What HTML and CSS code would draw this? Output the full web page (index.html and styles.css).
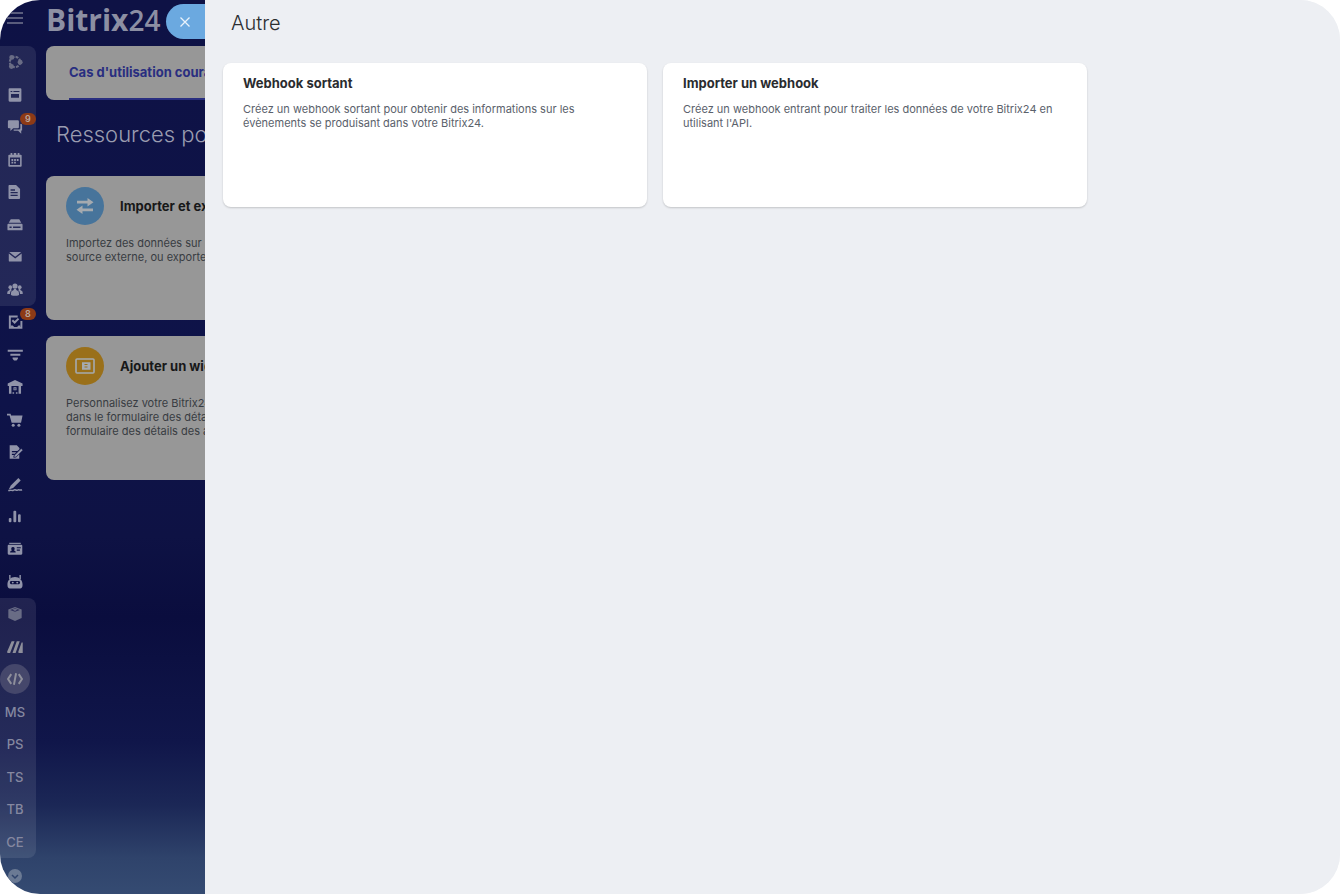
FILE: index.html
```
<!DOCTYPE html>
<html lang="fr">
<head>
<meta charset="utf-8">
<title>Bitrix24 - Autre</title>
<link rel="stylesheet" href="styles.css">
</head>
<body>
<div class="app">
  <aside class="sidebar">
    <button class="burger" aria-label="Menu">
      <svg width="16" height="14" viewBox="0 0 16 14"><path d="M0 2h16M0 7h16M0 12h16" stroke="currentColor" stroke-width="1.5"/></svg>
    </button>
    <nav class="menu" aria-label="Outils">
      <div class="group shaded g-top">
        <a class="item dim" href="#" aria-label="Collaboration"><svg viewBox="0 0 18 18"><circle cx="9" cy="9" r="5.800" fill="none" stroke="currentColor" stroke-width="2.400" stroke-dasharray="3.200 1.355"/><circle cx="5.400" cy="3.800" r="2.800"/><circle cx="14.800" cy="9.400" r="2.800"/><circle cx="5" cy="14" r="2.800"/></svg></a>
        <a class="item" href="#" aria-label="Actualités"><svg viewBox="0 0 18 18"><path fill-rule="evenodd" d="M3 1.500h12A1.200 1.200 0 0 1 16.200 2.700v12.600a1.200 1.200 0 0 1-1.200 1.200H3a1.200 1.200 0 0 1-1.200-1.200V2.700A1.200 1.200 0 0 1 3 1.500zM4 4.500v1.200h2V4.500zm3.200 0v1.200h6.800V4.500zM4.500 8v4h9V8z"/></svg></a>
        <a class="item" href="#" aria-label="Messagerie"><svg viewBox="0 0 18 18"><path d="M2.200 1.500h10A1.200 1.200 0 0 1 13.400 2.700v6.500a1.200 1.200 0 0 1-1.200 1.200H7L3.800 13.600v-3.200H2.200A1.200 1.200 0 0 1 1 9.200V2.700A1.200 1.200 0 0 1 2.200 1.500zM15 5.500h1a1 1 0 0 1 1 1V13h-1v3.500L12.500 13.300H7.500v-1.500h6a1.500 1.500 0 0 0 1.500-1.500z"/></svg><span class="badge">9</span></a>
        <a class="item" href="#" aria-label="Calendrier"><svg viewBox="0 0 18 18"><path fill-rule="evenodd" d="M4 1h2v2h1.600V1h2.800v2H12V1h2v2h1.500a1 1 0 0 1 1 1v11.500a1 1 0 0 1-1 1h-13a1 1 0 0 1-1-1V4a1 1 0 0 1 1-1H4zM3.300 6.200v8.500h11.400V6.200z"/><path d="M5 7.800h2v2.200H5zM8 7.800h2v2.200H8zM11 7.800h2v2.200h-2zM5 11h2v2H5zM8 11h2v2H8z"/></svg></a>
        <a class="item" href="#" aria-label="Documents"><svg viewBox="0 0 18 18"><path fill-rule="evenodd" d="M2.700 1h7.500l4.500 4.500v10.300a1 1 0 0 1-1 1h-11a1 1 0 0 1-1-1V2a1 1 0 0 1 1-1zM4 6v1.500h5V6zm0 3v1.500h8V9zm0 3v1.500h8V12z"/></svg></a>
        <a class="item" href="#" aria-label="Drive"><svg viewBox="0 0 18 18"><path d="M4.200 2.500h9.600l2.200 4H2z"/><path fill-rule="evenodd" d="M1.500 7.600h15a1 1 0 0 1 1 1v5.400a1 1 0 0 1-1 1h-15a1 1 0 0 1-1-1V8.600a1 1 0 0 1 1-1zm1.300 3.200v1.600h2.400v-1.600zm4 0v1.600h8.400v-1.600z"/></svg></a>
        <a class="item" href="#" aria-label="Webmail"><svg viewBox="0 0 18 18"><path d="M2.500 3.500h13.500L9.200 8.800zM2 5 9.200 10.800 16.500 5v8.200a1 1 0 0 1-1 1H3a1 1 0 0 1-1-1z"/></svg></a>
        <a class="item" href="#" aria-label="Groupes de travail"><svg viewBox="0 0 18 18"><circle cx="9" cy="4.500" r="2.900"/><circle cx="3.700" cy="5.800" r="2.100"/><circle cx="14.300" cy="5.800" r="2.100"/><path d="M7.800 7.500h2.400l.3 1.500 2 1c1 .6.900 2 1.100 4.500-3 1.300-6.200 1.300-9.200 0 .2-2.500.1-3.900 1.100-4.500l2-1zM.3 13.500c0-2.500.1-3.100 1.300-3.700l1.300-.7.200-2h1.600l.2 1.700.5.400C3.500 10 3.700 11.500 3.400 13.500zM17.700 13.500c0-2.500-.1-3.100-1.300-3.700l-1.300-.7-.2-2h-1.600l-.2 1.700-.5.400c1.900.8 1.700 2.300 2 4.300z"/></svg></a>
      </div>
      <div class="group g-mid">
        <a class="item" href="#" aria-label="Tâches"><svg viewBox="0 0 18 18"><path d="M12 2.800H3.200v12.800h13V8" fill="none" stroke="currentColor" stroke-width="2.200"/><path d="M4 13h2.500l1.500 1.500h3.400l1.500-1.500H15v2H4z"/><path d="m6 7 2.600 2.600L13 5.200" fill="none" stroke="currentColor" stroke-width="2.200"/></svg><span class="badge">8</span></a>
        <a class="item" href="#" aria-label="CRM"><svg viewBox="0 0 18 18"><path d="M.8 3h17v2.300h-17zM3.800 7.600h11.200v2.200H3.800zM6.300 11.800h6v1.400l-1.600 2H7.900l-1.600-2z"/></svg></a>
        <a class="item" href="#" aria-label="Inventaire"><svg viewBox="0 0 18 18"><path fill-rule="evenodd" d="M9 1 17.500 5v3h-1.700v8.500H2.200V8H.8V5zM5 8v8.500h1.200v-1.700H8v1.700h2v-1.700h1.800v1.700H13V8zM7.300 9.300h3.400v3.400H7.300zM8.400 10.300v1.400h1.200v-1.400z"/></svg></a>
        <a class="item" href="#" aria-label="Boutique en ligne"><svg viewBox="0 0 18 18"><path d="M0 2h4l.6 2H17.500L15.800 12H5.200L2.900 3.800H0z"/><circle cx="7" cy="14.800" r="1.700"/><circle cx="13.400" cy="14.800" r="1.700"/></svg></a>
        <a class="item" href="#" aria-label="Contrats"><svg viewBox="0 0 18 18"><path d="M3 1.500h8l3 3v1.400L11.800 8H5.500v1.400h4.900L8.800 11H5.500v1.400h2.300L7.300 15h3l3.500-3.500v5H3z"/><path d="m16 5 1.900 1.900-7.600 7.600-2.600.7.700-2.600z" stroke="#10154d" stroke-width=".6"/></svg></a>
        <a class="item" href="#" aria-label="Signature"><svg viewBox="0 0 18 18"><path d="m12.800 1.200 2.600 2.600-8.500 8.500-5 1.700 2.400-4.300z"/><path d="M1.500 15.500c3-1.500 4 .5 6-.8s2.800.8 4.300 0 2.500.3 5.200-.2" fill="none" stroke="currentColor" stroke-width="1.700"/></svg></a>
        <a class="item" href="#" aria-label="Analyses"><svg viewBox="0 0 18 18"><rect x="2" y="10" width="3" height="5" rx="1.200"/><rect x="7.200" y="2" width="3.200" height="13" rx="1.200"/><rect x="12.400" y="6" width="3" height="9" rx="1.200"/></svg></a>
        <a class="item" href="#" aria-label="Employés"><svg viewBox="0 0 18 18"><path d="M2.500 2h13v1.300h-13z"/><path fill-rule="evenodd" d="M2 4.200h14a1.200 1.200 0 0 1 1.200 1.200v8.800a1.200 1.200 0 0 1-1.200 1.200H2a1.200 1.200 0 0 1-1.200-1.200V5.400A1.200 1.200 0 0 1 2 4.200zM3.500 12.900h6.300c0-1.500-.4-1.700-2-2.200 1.400-1.500 1.100-4-1.100-4s-2.500 2.500-1.100 4c-1.700.5-2.100.7-2.100 2.200zM11 7v1.200h4.500V7zm0 2.700v1.200h3.500V9.700z"/></svg></a>
        <a class="item" href="#" aria-label="Robots"><svg viewBox="0 0 18 18"><path d="M3.200 1v4.500M14.800 1v4.500" stroke="currentColor" stroke-width="1.600"/><path fill-rule="evenodd" d="M9 3.500c5 0 8.500 3.500 8.500 8.700 0 3-1 4.100-2.700 4.100H3.200c-1.700 0-2.700-1.100-2.700-4.100C.5 7 4 3.500 9 3.500zM4.500 8C3 8 2.800 11.400 4.600 11.400h8.800c1.800 0 1.600-3.400.1-3.400z"/><circle cx="6.500" cy="9.700" r="1.100"/><circle cx="11.500" cy="9.700" r="1.100"/></svg></a>
      </div>
      <div class="group shaded g-bottom">
        <a class="item dim" href="#" aria-label="Marché"><svg viewBox="0 0 18 18"><path d="M9 1.200 16.500 4v9.500L9 17l-7.500-3.500V4z"/><path d="M3.500 4.400 9 6.600l5.500-2.200L9 2.500z" fill="#2b2c5a"/><path d="M6 4 9 3l3 1-3 1.500z"/></svg></a>
        <a class="item soft" href="#" aria-label="Mon espace"><svg viewBox="0 0 18 18"><path d="M5.200 2.500h3.300L3.500 15.800H.7c-1-.8-.4-2 0-3zM11 2.500h3.300L9.700 15.800H6.200zM16.400 4h1.300v11.800h-4.500c-.8-.8-.5-2 0-3z"/></svg></a>
        <a class="item soft" href="#" aria-label="Développeurs" aria-current="page"><span class="current"><svg viewBox="0 0 18 18"><path d="M4.800 3.500 1.200 9l3.600 5.500M13.200 3.500 16.800 9l-3.600 5.500M10.200 2.500 7.800 15.500" fill="none" stroke="currentColor" stroke-width="2.200"/></svg></span></a>
        <a class="item text" href="#">MS</a>
        <a class="item text" href="#">PS</a>
        <a class="item text" href="#">TS</a>
        <a class="item text" href="#">TB</a>
        <a class="item text" href="#">CE</a>
      </div>
      <button class="more" aria-label="Plus"><svg width="14" height="14" viewBox="0 0 14 14"><circle cx="7" cy="7" r="7" fill="#6b7a94"/><path d="m4 6 3 3 3-3" fill="none" stroke="#30446c" stroke-width="1.500"/></svg></button>
    </nav>
  </aside>

  <main class="page">
    <header class="brand"><span class="brand-name">Bitrix</span><span class="brand-num">24</span></header>
    <div class="tabs"><a class="tab" href="#">Cas d'utilisation courants</a></div>
    <h1 class="page-title">Ressources pour développeurs</h1>
    <div class="tiles">
      <section class="tile">
        <div class="tile-head">
          <span class="disc blue"><svg width="18" height="18" viewBox="0 0 18 18"><path d="M1 3.800h10.500V.9L17.500 5.200l-6 4.300V6.600H1zM17 11.400H6.500V8.500L.5 12.800l6 4.300v-2.900H17z"/></svg></span>
          <h2>Importer et exporter</h2>
        </div>
        <p>Importez des données sur Bitrix24 d'une<br>source externe, ou exportez des données</p>
      </section>
      <section class="tile">
        <div class="tile-head">
          <span class="disc gold"><svg width="22" height="18" viewBox="0 0 22 18"><rect x="2" y="2" width="18" height="14" rx="1" fill="none" stroke="currentColor" stroke-width="1.600"/><path fill-rule="evenodd" d="M8 5.200h8.500v7.500H8zM10.500 7v1h3V7zm0 2.500v1h3v-1z"/></svg></span>
          <h2>Ajouter un widget</h2>
        </div>
        <p>Personnalisez votre Bitrix24 : ajoutez<br>dans le formulaire des détails du CRM, le<br>formulaire des détails des appels</p>
      </section>
    </div>
  </main>

  <section class="slider" aria-labelledby="slider-title">
    <button class="close" aria-label="Fermer"><svg width="12" height="12" viewBox="0 0 12 12"><path d="m1.500 1.500 9 9M10.500 1.500l-9 9" stroke="currentColor" stroke-width="1.300"/></svg></button>
    <h1 id="slider-title" class="slider-title">Autre</h1>
    <div class="cards">
      <a class="card" href="#">
        <h2>Webhook sortant</h2>
        <p>Créez un webhook sortant pour obtenir des informations sur les évènements se produisant dans votre Bitrix24.</p>
      </a>
      <a class="card" href="#">
        <h2>Importer un webhook</h2>
        <p>Créez un webhook entrant pour traiter les données de votre Bitrix24 en utilisant l'API.</p>
      </a>
    </div>
  </section>
</div>
</body>
</html>
```
FILE: styles.css
```
* { box-sizing: border-box; }
body { margin: 0; background: #fff; font-family: Inter, "Liberation Sans", sans-serif; }
h1, h2, p { margin: 0; }
a { color: inherit; text-decoration: none; }
button { border: 0; padding: 0; background: none; color: inherit; cursor: pointer; }
svg { display: block; fill: currentColor; flex: none; }

.app {
  position: relative;
  display: flex;
  min-height: 100vh;
  overflow: hidden;
  border-radius: 40px;
  background: #edeff3 linear-gradient(#0e1245 0%, #0e1349 45%, #0e1244 60%, #0a0d3e 69%, #10164a 83%, #1b2756 90%, #2f436b 96%, #354b72 100%) left top / 240px 100% no-repeat;
}

.sidebar { flex: none; width: 36px; display: flex; flex-direction: column; color: #9093a9; }
.burger { height: 46px; padding: 0 0 10px 7px; display: flex; align-items: center; color: #73768f; }
.menu { flex: 1; display: flex; flex-direction: column; }
.group { display: flex; flex-direction: column; }
.g-top, .g-bottom { flex: 8; }
.g-mid { flex: 9; }
.shaded { background: rgba(255, 255, 255, .09); border-radius: 0 8px 8px 0; }
.item { position: relative; flex: 1; min-height: 24px; padding-right: 6px; display: flex; align-items: center; justify-content: center; }
.item svg { width: 16px; height: 16px; }
.dim { color: #696c85; }
.soft { color: #8e8f9b; }
.text { font-size: 13px; font-weight: 500; color: #8588a0; }
.badge {
  position: absolute; top: 2px; right: 0;
  min-width: 16px; height: 12px; border-radius: 6px;
  background: #8d3a16; color: #b9a69d;
  font-size: 9px; line-height: 12px; font-weight: 600; text-align: center;
}
.current { flex: none; width: 30px; height: 30px; border-radius: 50%; background: #45476b; display: flex; align-items: center; justify-content: center; }
.more { flex: none; height: 36px; padding-left: 8px; display: flex; align-items: center; }

.page { flex: 1; min-width: 0; padding: 0 16px 0 10px; }
.brand { height: 46px; padding: 0 0 6px; display: flex; align-items: center; color: #8c8fa3; }
.brand-name { font: 700 30px/40px "Open Sans", sans-serif; }
.brand-num { font: 600 28px/40px "Open Sans", sans-serif; }
.tabs { height: 54px; padding-left: 23px; border-radius: 8px; background: #979797; display: flex; }
.tab { display: flex; align-items: center; flex: 1; border-bottom: 2px solid #292e80; color: #292e80; font-size: 13px; font-weight: 700; }
.page-title { padding: 20px 0 27px 10px; font-size: 22px; line-height: 29px; font-weight: 300; color: #9a9cb0; }
.tiles { display: grid; gap: 16px; }
.tile { min-height: 144px; padding: 11px 20px; border-radius: 8px; background: #979797; }
.tile-head { display: flex; align-items: center; gap: 16px; }
.tile-head h2 { font-size: 13px; line-height: 20px; font-weight: 700; color: #171819; }
.tile p { margin-top: 11px; font-size: 11px; line-height: 14px; color: #383c42; }
.disc { flex: none; width: 38px; height: 38px; border-radius: 50%; display: flex; align-items: center; justify-content: center; color: #a5aaaf; }
.blue { background: #47749b; }
.gold { background: #9a701a; }

.slider { position: absolute; inset: 0 0 0 205px; padding: 9px 18px; background: #edeff3; }
.close {
  position: absolute; top: 4px; right: 100%;
  width: 39px; height: 35px; padding-left: 13px;
  border-radius: 18px 0 0 18px; background: #6ba9e0; color: #e9f2fb;
}
.slider-title { padding-left: 8px; font-size: 20px; line-height: 28px; font-weight: 300; color: #2b2d30; }
.cards { margin-top: 26px; display: grid; grid-template-columns: repeat(auto-fill, minmax(360px, 424px)); gap: 16px; }
.card { min-height: 144px; padding: 10px 20px; border-radius: 8px; background: #fff; box-shadow: 0 1px 2px rgba(0, 0, 0, .18); }
.card h2 { font-size: 13px; line-height: 20px; font-weight: 700; color: #2a2c2f; }
.card p { margin-top: 9px; font-size: 11px; line-height: 14px; color: #5a616b; }
```
